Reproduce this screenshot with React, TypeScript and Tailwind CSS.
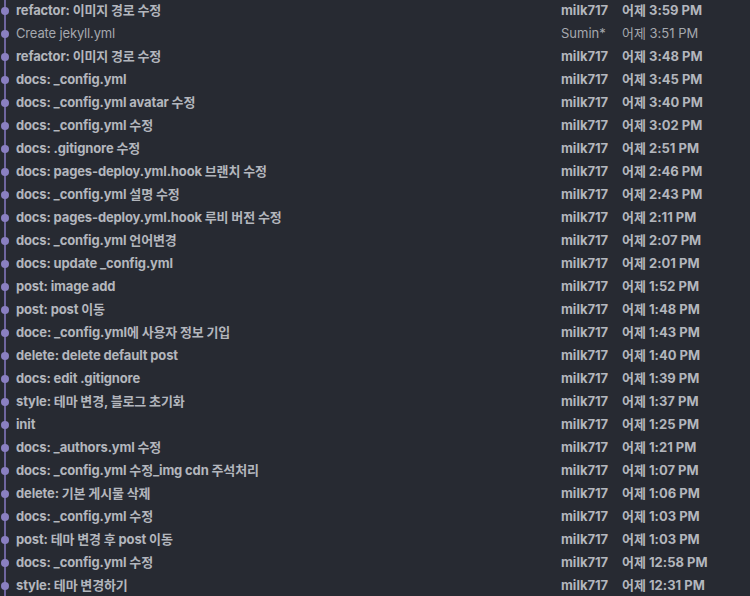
const commits: { msg: string; author: string; time: string; bold: boolean }[] = [
  { msg: "refactor: 이미지 경로 수정", author: "milk717", time: "어제 3:59 PM", bold: true },
  { msg: "Create jekyll.yml", author: "Sumin*", time: "어제 3:51 PM", bold: false },
  { msg: "refactor: 이미지 경로 수정", author: "milk717", time: "어제 3:48 PM", bold: true },
  { msg: "docs: _config.yml", author: "milk717", time: "어제 3:45 PM", bold: true },
  { msg: "docs: _config.yml avatar 수정", author: "milk717", time: "어제 3:40 PM", bold: true },
  { msg: "docs: _config.yml 수정", author: "milk717", time: "어제 3:02 PM", bold: true },
  { msg: "docs: .gitignore 수정", author: "milk717", time: "어제 2:51 PM", bold: true },
  { msg: "docs: pages-deploy.yml.hook 브랜치 수정", author: "milk717", time: "어제 2:46 PM", bold: true },
  { msg: "docs: _config.yml 설명 수정", author: "milk717", time: "어제 2:43 PM", bold: true },
  { msg: "docs: pages-deploy.yml.hook 루비 버전 수정", author: "milk717", time: "어제 2:11 PM", bold: true },
  { msg: "docs: _config.yml 언어변경", author: "milk717", time: "어제 2:07 PM", bold: true },
  { msg: "docs: update _config.yml", author: "milk717", time: "어제 2:01 PM", bold: true },
  { msg: "post: image add", author: "milk717", time: "어제 1:52 PM", bold: true },
  { msg: "post: post 이동", author: "milk717", time: "어제 1:48 PM", bold: true },
  { msg: "doce: _config.yml에 사용자 정보 기입", author: "milk717", time: "어제 1:43 PM", bold: true },
  { msg: "delete: delete default post", author: "milk717", time: "어제 1:40 PM", bold: true },
  { msg: "docs: edit .gitignore", author: "milk717", time: "어제 1:39 PM", bold: true },
  { msg: "style: 테마 변경, 블로그 초기화", author: "milk717", time: "어제 1:37 PM", bold: true },
  { msg: "init", author: "milk717", time: "어제 1:25 PM", bold: true },
  { msg: "docs: _authors.yml 수정", author: "milk717", time: "어제 1:21 PM", bold: true },
  { msg: "docs: _config.yml 수정_img cdn 주석처리", author: "milk717", time: "어제 1:07 PM", bold: true },
  { msg: "delete: 기본 게시물 삭제", author: "milk717", time: "어제 1:06 PM", bold: true },
  { msg: "docs: _config.yml 수정", author: "milk717", time: "어제 1:03 PM", bold: true },
  { msg: "post: 테마 변경 후 post 이동", author: "milk717", time: "어제 1:03 PM", bold: true },
  { msg: "docs: _config.yml 수정", author: "milk717", time: "어제 12:58 PM", bold: true },
  { msg: "style: 테마 변경하기", author: "milk717", time: "어제 12:31 PM", bold: true },
];

const App = () => {
  return (
    <div
      className="w-[750px] h-[596px] overflow-hidden bg-[#272a32] text-[13px] text-[#b3b6bd]"
      style={{ fontFamily: '"Inter", "Noto Sans CJK KR", sans-serif' }}
    >
      <div className="-mt-[1px]">
        {commits.map((c, i) => (
          <div key={i} className="flex items-center h-[23px]">
            {/* graph column */}
            <div className="relative w-[16px] h-full shrink-0">
              <div className="absolute left-[4px] top-0 bottom-0 w-[2px] bg-[#6f66a0]" />
              <div className="absolute left-[1px] top-[7.5px] w-[8px] h-[8px] rounded-full bg-[#8a80c2]" />
            </div>
            <div
              className={`flex-1 truncate tracking-[-0.15px] ${c.bold ? "font-bold" : "font-normal text-[#a5a8ae]"}`}
            >
              {c.msg}
            </div>
            <div className={`w-[61px] shrink-0 ${c.bold ? "font-bold" : "font-normal text-[#a5a8ae]"}`}>
              {c.author}
            </div>
            <div className={`w-[128px] shrink-0 ${c.bold ? "font-bold" : "font-normal text-[#a5a8ae]"}`}>
              {c.time}
            </div>
          </div>
        ))}
      </div>
    </div>
  );
};

export default App;
